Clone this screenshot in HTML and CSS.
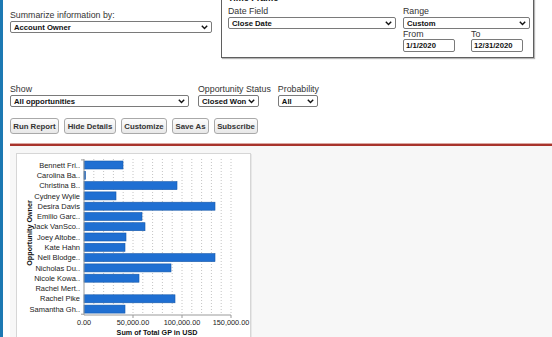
FILE: index.html
```html
<!DOCTYPE html>
<html lang="en">
<head>
  <meta charset="UTF-8">
  <title>Report Options</title>
  <link rel="stylesheet" href="styles.css">
</head>
<body>
  <div class="page">
    <div class="top">
      <div class="summary">
        <div class="label">Summarize information by:</div>
        <div class="select select-summary"><span>Account Owner</span><svg class="chev" width="7" height="5" viewBox="0 0 7 5"><polyline points="0.8,0.8 3.5,3.6 6.2,0.8"/></svg></div>
      </div>
      <div class="timeframe">
        <div class="tf-title">Time Frame</div>
        <div class="tf-grid">
          <div>
            <div class="label">Date Field</div>
            <div class="select"><span>Close Date</span><svg class="chev" width="7" height="5" viewBox="0 0 7 5"><polyline points="0.8,0.8 3.5,3.6 6.2,0.8"/></svg></div>
          </div>
          <div>
            <div class="label">Range</div>
            <div class="select"><span>Custom</span><svg class="chev" width="7" height="5" viewBox="0 0 7 5"><polyline points="0.8,0.8 3.5,3.6 6.2,0.8"/></svg></div>
            <div class="dates">
              <div class="date-col">
                <div class="label label-small">From</div>
                <input class="date" type="text" value="1/1/2020">
              </div>
              <div class="date-col date-col-last">
                <div class="label label-small">To</div>
                <input class="date" type="text" value="12/31/2020">
              </div>
            </div>
          </div>
        </div>
      </div>
    </div>

    <div class="filters">
      <div class="filter filter-show">
        <div class="label">Show</div>
        <div class="select"><span>All opportunities</span><svg class="chev" width="7" height="5" viewBox="0 0 7 5"><polyline points="0.8,0.8 3.5,3.6 6.2,0.8"/></svg></div>
      </div>
      <div class="filter filter-status">
        <div class="label">Opportunity Status</div>
        <div class="select select-status"><span>Closed Won</span><svg class="chev" width="7" height="5" viewBox="0 0 7 5"><polyline points="0.8,0.8 3.5,3.6 6.2,0.8"/></svg></div>
      </div>
      <div class="filter">
        <div class="label">Probability</div>
        <div class="select select-prob"><span>All</span><svg class="chev" width="7" height="5" viewBox="0 0 7 5"><polyline points="0.8,0.8 3.5,3.6 6.2,0.8"/></svg></div>
      </div>
    </div>

    <div class="buttons">
      <button class="btn btn-run">Run Report</button>
      <button class="btn btn-hide">Hide Details</button>
      <button class="btn btn-custom">Customize</button>
      <button class="btn btn-save">Save As</button>
      <button class="btn btn-sub">Subscribe</button>
    </div>

    <div class="results">
      <div class="chart-box">
        <svg class="chart" width="233" height="198" viewBox="0 0 233 198">
          <g class="grid">
            <line x1="76.8" y1="5" x2="76.8" y2="161"/>
            <line x1="86.6" y1="5" x2="86.6" y2="161"/>
            <line x1="96.4" y1="5" x2="96.4" y2="161"/>
            <line x1="106.2" y1="5" x2="106.2" y2="161"/>
            <line x1="116" y1="5" x2="116" y2="161"/>
            <line x1="125.8" y1="5" x2="125.8" y2="161"/>
            <line x1="135.6" y1="5" x2="135.6" y2="161"/>
            <line x1="145.4" y1="5" x2="145.4" y2="161"/>
            <line x1="155.2" y1="5" x2="155.2" y2="161"/>
            <line x1="165" y1="5" x2="165" y2="161"/>
            <line x1="174.8" y1="5" x2="174.8" y2="161"/>
            <line x1="184.6" y1="5" x2="184.6" y2="161"/>
            <line x1="194.4" y1="5" x2="194.4" y2="161"/>
            <line x1="204.2" y1="5" x2="204.2" y2="161"/>
            <line x1="214" y1="5" x2="214" y2="161"/>
          </g>
          <g class="bars">
            <rect x="67" y="7" width="39" height="8"/>
            <rect x="67" y="17.3" width="1.5" height="8"/>
            <rect x="67" y="27.6" width="93" height="8"/>
            <rect x="67" y="37.9" width="32" height="8"/>
            <rect x="67" y="48.2" width="131" height="8"/>
            <rect x="67" y="58.5" width="58" height="8"/>
            <rect x="67" y="68.7" width="61" height="8"/>
            <rect x="67" y="79" width="42" height="8"/>
            <rect x="67" y="89.3" width="41" height="8"/>
            <rect x="67" y="99.6" width="131" height="8"/>
            <rect x="67" y="109.9" width="87" height="8"/>
            <rect x="67" y="120.2" width="55" height="8"/>
            <rect x="67" y="140.8" width="91" height="8"/>
            <rect x="67" y="151.1" width="41" height="8"/>
          </g>
          <g class="axis">
            <line x1="67" y1="5" x2="67" y2="161"/>
            <line x1="67" y1="161" x2="214" y2="161"/>
            <line x1="116" y1="161" x2="116" y2="164"/>
            <line x1="165" y1="161" x2="165" y2="164"/>
            <line x1="214" y1="161" x2="214" y2="164"/>
            <line x1="64" y1="5.9" x2="67" y2="5.9"/>
            <line x1="64" y1="160.2" x2="67" y2="160.2"/>
          </g>
          <g class="names">
            <text x="63" y="13.6">Bennett Fri..</text>
            <text x="63" y="23.9">Carolina Ba..</text>
            <text x="63" y="34.2">Christina B..</text>
            <text x="63" y="44.5">Cydney Wylie</text>
            <text x="63" y="54.8">Desira Davis</text>
            <text x="63" y="65.1">Emilio Garc..</text>
            <text x="63" y="75.3">Jack VanSco..</text>
            <text x="63" y="85.6">Joey Altobe..</text>
            <text x="63" y="95.9">Kate Hahn</text>
            <text x="63" y="106.2">Nell Blodge..</text>
            <text x="63" y="116.5">Nicholas Du..</text>
            <text x="63" y="126.8">Nicole Kowa..</text>
            <text x="63" y="137.1">Rachel Mert..</text>
            <text x="63" y="147.4">Rachel Pike</text>
            <text x="63" y="157.7">Samantha Gh..</text>
          </g>
          <g class="ticks">
            <text x="67" y="171">0.00</text>
            <text x="116" y="171">50,000.00</text>
            <text x="165" y="171">100,000.00</text>
            <text x="214" y="171">150,000.00</text>
          </g>
          <text class="axis-title" x="140" y="181">Sum of Total GP in USD</text>
          <text class="axis-title" x="0" y="0" transform="translate(15 79) rotate(-90)">Opportunity Owner</text>
        </svg>
      </div>
    </div>
  </div>
</body>
</html>
```

FILE: styles.css
```css
body {
  margin: 0;
  background-color: #fff;
  font-family: "Liberation Sans", Arial, sans-serif;
  color: #222;
  overflow: hidden;
}

.page {
  border-left: 3px solid #1c79b3;
  padding-left: 7px;
  min-height: 100vh;
}

.label {
  font-size: 8.8px;
  line-height: 11px;
  color: #333;
}

.label-small {
  line-height: 10px;
}

.select {
  display: flex;
  align-items: center;
  justify-content: space-between;
  box-sizing: border-box;
  height: 12px;
  padding: 0 3px 0 3px;
  border: 1px solid #7a7a7a;
  border-radius: 2px;
  background-color: #fff;
  font-size: 7.7px;
  font-weight: bold;
  color: #111;
}

.chev {
  flex: none;
}

.chev polyline {
  fill: none;
  stroke: #111;
  stroke-width: 1.4;
}

/* top row */

.top {
  display: flex;
  align-items: flex-start;
  margin-top: -8px;
}

.summary {
  width: 202px;
  padding-top: 17px;
}

.summary .label {
  line-height: 12px;
}

.timeframe {
  margin-left: 9px;
  width: 313px;
  box-sizing: border-box;
  padding: 0 6px 5px 6px;
  border: 1px solid #5f5f5f;
  box-shadow: 1px 1px 1px #b5b5b5;
}

.tf-title {
  font-size: 9px;
  font-weight: bold;
  line-height: 11px;
  margin-bottom: 2px;
  color: #111;
}

.tf-grid {
  display: grid;
  grid-template-columns: 168px 127px;
  column-gap: 7px;
}

.dates {
  display: flex;
}

.date-col {
  flex: none;
  width: 68px;
}

.date-col-last {
  width: 52px;
}

.date {
  display: block;
  box-sizing: border-box;
  width: 52px;
  height: 13px;
  margin: 0;
  padding: 0 2px;
  border: 1px solid #7a7a7a;
  border-radius: 2px;
  font-family: "Liberation Sans", Arial, sans-serif;
  font-size: 7.7px;
  font-weight: bold;
  color: #111;
}

/* filters */

.filters {
  display: flex;
  margin-top: 26px;
}

.filter-show {
  width: 179px;
  margin-right: 9px;
}

.filter-status {
  margin-right: 7px;
}

.select-status {
  width: 61px;
}

.select-prob {
  width: 40px;
}

/* buttons */

.buttons {
  display: flex;
  margin-top: 11px;
}

.btn {
  box-sizing: border-box;
  height: 16px;
  margin: 0 5px 0 0;
  padding: 0;
  border: 1px solid #a9a9a9;
  border-radius: 3px;
  background: linear-gradient(#fdfdfd, #e8e8e8);
  font-family: "Liberation Sans", Arial, sans-serif;
  font-size: 7.8px;
  font-weight: bold;
  color: #333;
}

.btn-run { width: 49px; }
.btn-hide { width: 52px; }
.btn-custom { width: 46px; }
.btn-save { width: 37px; margin-right: 5px; }
.btn-sub { width: 44px; }

/* results */

.results {
  margin-top: 10px;
  padding: 7px 6px 0 6px;
  border-top: 2px solid #a8342c;
  box-shadow: 0 -1px 0 #dba6a1;
  background-color: #f7f7f7;
  height: 200px;
}

.chart-box {
  width: 235px;
  height: 198px;
  box-sizing: border-box;
  border: 1px solid #d6d6d6;
  box-shadow: 1px 1px 0 #e8e8e8;
  background-color: #fff;
}

.chart {
  display: block;
  font-family: "Liberation Sans", Arial, sans-serif;
}

.grid line {
  stroke: #c4c4c4;
  stroke-width: 1;
  stroke-dasharray: 1 2;
}

.bars rect {
  fill: #1f6fd2;
  stroke: #1659aa;
  stroke-width: 0.6;
}

.axis line {
  stroke: #9a9a9a;
  stroke-width: 1;
}

.names text {
  font-size: 7.5px;
  fill: #222;
  text-anchor: end;
}

.ticks text {
  font-size: 7.3px;
  fill: #222;
  text-anchor: middle;
}

.axis-title {
  font-size: 7.2px;
  font-weight: bold;
  fill: #111;
  text-anchor: middle;
}
```
